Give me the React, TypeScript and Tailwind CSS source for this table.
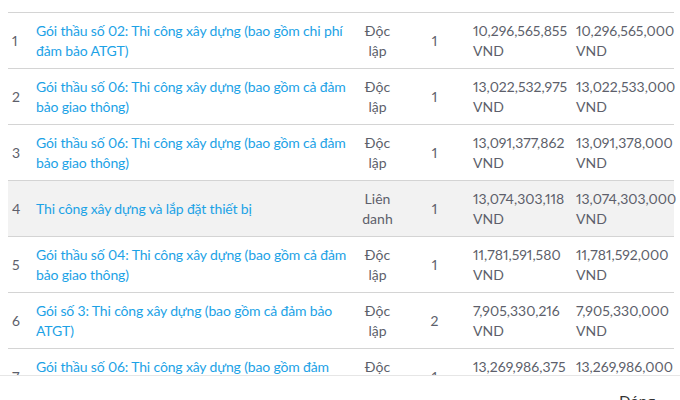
import React from "react";

type Row = {
  n: string;
  name: string[];
  type: string[];
  count: string;
  p1: string;
  p2: string;
  shaded?: boolean;
};

const rows: Row[] = [
  {
    n: "1",
    name: ["Gói thầu số 02: Thi công xây dựng (bao gồm chi phí", "đảm bảo ATGT)"],
    type: ["Độc", "lập"],
    count: "1",
    p1: "10,296,565,855",
    p2: "10,296,565,000",
  },
  {
    n: "2",
    name: ["Gói thầu số 06: Thi công xây dựng (bao gồm cả đảm", "bảo giao thông)"],
    type: ["Độc", "lập"],
    count: "1",
    p1: "13,022,532,975",
    p2: "13,022,533,000",
  },
  {
    n: "3",
    name: ["Gói thầu số 06: Thi công xây dựng (bao gồm cả đảm", "bảo giao thông)"],
    type: ["Độc", "lập"],
    count: "1",
    p1: "13,091,377,862",
    p2: "13,091,378,000",
  },
  {
    n: "4",
    name: ["Thi công xây dựng và lắp đặt thiết bị"],
    type: ["Liên", "danh"],
    count: "1",
    p1: "13,074,303,118",
    p2: "13,074,303,000",
    shaded: true,
  },
  {
    n: "5",
    name: ["Gói thầu số 04: Thi công xây dựng (bao gồm cả đảm", "bảo giao thông)"],
    type: ["Độc", "lập"],
    count: "1",
    p1: "11,781,591,580",
    p2: "11,781,592,000",
  },
  {
    n: "6",
    name: ["Gói số 3: Thi công xây dựng (bao gồm cả đảm bảo", "ATGT)"],
    type: ["Độc", "lập"],
    count: "2",
    p1: "7,905,330,216",
    p2: "7,905,330,000",
  },
  {
    n: "7",
    name: ["Gói thầu số 06: Thi công xây dựng (bao gồm đảm", "bảo giao thông)"],
    type: ["Độc", "lập"],
    count: "1",
    p1: "13,269,986,375",
    p2: "13,269,986,000",
  },
];

export default function App() {
  return (
    <div
      className="w-[680px] h-[400px] overflow-hidden bg-white flex flex-col text-[14px] leading-[20px] text-[#5d5f6b] proportional-nums"
      style={{ fontFamily: "Lato, 'Noto Sans', sans-serif" }}
    >
      <div className="h-[375px] overflow-hidden pt-[12px] px-[8px] shrink-0">
        <div className="w-[666px] border-t border-[#d4d4d4]">
          {rows.map((r) => (
            <div
              key={r.n}
              className={`grid grid-cols-[24px_323px_45px_69px_103px_102px] items-center h-[56px] border-b border-[#d4d4d4] ${
                r.shaded ? "bg-[#f2f2f2]" : "bg-white"
              }`}
            >
              <div className="pl-[4px]">{r.n}</div>
              <div className="pl-[4px] text-[#1ca2e6] whitespace-nowrap tracking-[-0.15px]">
                {r.name.map((l, i) => (
                  <div key={i}>{l}</div>
                ))}
              </div>
              <div className="text-center">
                {r.type.map((l, i) => (
                  <div key={i}>{l}</div>
                ))}
              </div>
              <div className="text-center">{r.count}</div>
              <div className="pl-[4px] whitespace-nowrap">
                <div>{r.p1}</div>
                <div>VND</div>
              </div>
              <div className="pl-[4px] whitespace-nowrap">
                <div>{r.p2}</div>
                <div>VND</div>
              </div>
            </div>
          ))}
        </div>
      </div>
      <div className="flex-1 border-t border-[#e6e6e6] bg-white flex justify-end pr-[25px] pt-[15px]">
        <span className="text-[15px] text-[#333]">Đóng</span>
      </div>
    </div>
  );
}
